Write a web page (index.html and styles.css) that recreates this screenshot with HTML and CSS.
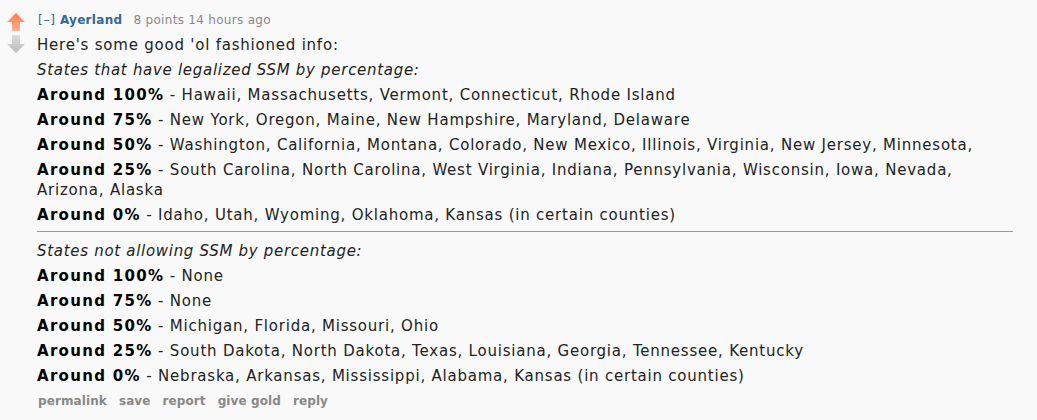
FILE: index.html
```html
<!DOCTYPE html>
<html>
<head>
<meta charset="utf-8">
<link rel="stylesheet" href="styles.css">
</head>
<body>
<div class="comment">
  <div class="midcol">
    <svg class="arrow" width="20" height="20" viewBox="0 0 20 20">
      <defs>
        <linearGradient id="up" x1="0" y1="0" x2="0" y2="1">
          <stop offset="0" stop-color="#ff7a4a"/>
          <stop offset="1" stop-color="#ffb394"/>
        </linearGradient>
      </defs>
      <path d="M10 1 L19 10 L14 10 L14 19 L6 19 L6 10 L1 10 Z" fill="url(#up)"/>
    </svg>
    <svg class="arrow" width="20" height="20" viewBox="0 0 20 20">
      <defs>
        <linearGradient id="down" x1="0" y1="0" x2="0" y2="1">
          <stop offset="0" stop-color="#dcdcdc"/>
          <stop offset="1" stop-color="#bdbdbd"/>
        </linearGradient>
      </defs>
      <path d="M6 1 L14 1 L14 10 L19 10 L10 19 L1 10 L6 10 Z" fill="url(#down)"/>
    </svg>
  </div>
  <div class="entry">
    <p class="tagline"><a class="expand">[–]</a> <a class="author">Ayerland</a> <span class="score">8 points 14 hours ago</span></p>
    <div class="md">
      <p>Here's some good 'ol fashioned info:</p>
      <p><em>States that have legalized SSM by percentage:</em></p>
      <p><strong>Around 100%</strong> - Hawaii, Massachusetts, Vermont, Connecticut, Rhode Island</p>
      <p><strong>Around 75%</strong> - New York, Oregon, Maine, New Hampshire, Maryland, Delaware</p>
      <p><strong>Around 50%</strong> - Washington, California, Montana, Colorado, New Mexico, Illinois, Virginia, New Jersey, Minnesota,</p>
      <p><strong>Around 25%</strong> - South Carolina, North Carolina, West Virginia, Indiana, Pennsylvania, Wisconsin, Iowa, Nevada, Arizona, Alaska</p>
      <p><strong>Around 0%</strong> - Idaho, Utah, Wyoming, Oklahoma, Kansas (in certain counties)</p>
      <hr>
      <p><em>States not allowing SSM by percentage:</em></p>
      <p><strong>Around 100%</strong> - None</p>
      <p><strong>Around 75%</strong> - None</p>
      <p><strong>Around 50%</strong> - Michigan, Florida, Missouri, Ohio</p>
      <p><strong>Around 25%</strong> - South Dakota, North Dakota, Texas, Louisiana, Georgia, Tennessee, Kentucky</p>
      <p><strong>Around 0%</strong> - Nebraska, Arkansas, Mississippi, Alabama, Kansas (in certain counties)</p>
    </div>
    <ul class="buttons">
      <li>permalink</li>
      <li>save</li>
      <li>report</li>
      <li>give gold</li>
      <li>reply</li>
    </ul>
  </div>
</div>
</body>
</html>
```

FILE: styles.css
```css
html, body {
  margin: 0;
  padding: 0;
  background: #f9f9f9;
}
body {
  font-family: "DejaVu Sans", Verdana, sans-serif;
  color: #222;
}
.comment {
  display: flex;
  padding: 10px 0 0 6px;
}
.midcol {
  width: 20px;
  display: flex;
  flex-direction: column;
  gap: 2px;
  padding-top: 2px;
  margin-right: 11px;
}
.arrow {
  display: block;
}
.entry {
  width: 976px;
}
.tagline {
  margin: 0;
  font-size: 12px;
  letter-spacing: 0.3px;
  line-height: 20px;
  color: #888;
  padding-left: 1px;
}
.tagline .expand {
  color: #369;
  letter-spacing: 0.8px;
}
.tagline .author {
  color: #369;
  font-weight: bold;
  margin-right: 7px;
}
.md {
  font-size: 15px;
  letter-spacing: 0.78px;
  color: #222;
  margin-top: 5px;
}
.md p {
  margin: 0 0 5px 0;
  line-height: 20px;
}
.md em {
  letter-spacing: 0.7px;
}
.md strong {
  color: #000;
  letter-spacing: 1.3px;
}
.md hr {
  border: 0;
  height: 1px;
  background: #999;
  margin: 6px 0 9px 0;
}
.buttons {
  list-style: none;
  margin: 0;
  padding: 2px 0 0 1px;
  display: flex;
  gap: 12px;
  font-size: 12px;
  letter-spacing: 0.1px;
  font-weight: bold;
  color: #888;
  line-height: 16px;
}
```
